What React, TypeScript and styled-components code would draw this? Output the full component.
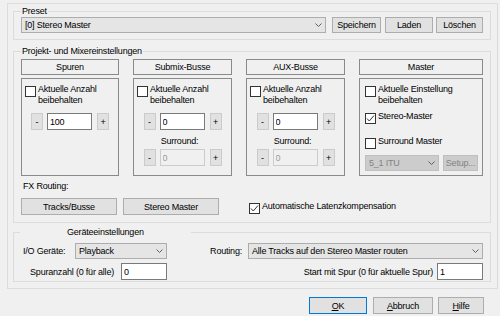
import React from "react";
import styled, { createGlobalStyle } from "styled-components";

const FONT = `"Liberation Sans", Arial, sans-serif`;

const Global = createGlobalStyle`
  html, body { margin: 0; padding: 0; background: #f0f0f0; }
  body { font-family: ${FONT}; font-size: 9px; letter-spacing: -0.2px; color: #000; }
  #root { width: 500px; height: 316px; overflow: hidden; }
`;

const Dialog = styled.div`
  width: 500px;
  height: 316px;
  box-sizing: border-box;
  padding: 3px 0 0 7px;
  display: flex;
  flex-direction: column;
`;

const Outer = styled.div`
  width: 491px;
  box-sizing: border-box;
  border: 1px solid #dcdcdc;
  padding: 2px 6px 6px 5px;
  display: flex;
  flex-direction: column;
`;

const Group = styled.fieldset<{ $mt: number; $pt: number; $pb: number }>`
  margin: ${(p) => p.$mt}px 0 0 0;
  padding: ${(p) => p.$pt}px 7px ${(p) => p.$pb}px 7px;
  border: 1px solid #dcdcdc;
  min-width: 0;
  box-sizing: border-box;
`;

const Legend = styled.legend<{ $pad?: number }>`
  font-size: 9px;
  line-height: 10px;
  height: 10px;
  padding: 0 ${(p) => p.$pad ?? 1}px;
  margin-left: ${(p) => (p.$pad ? -1 : 0)}px;
`;

const Row = styled.div<{ $h?: number; $mt?: number }>`
  display: flex;
  align-items: center;
  ${(p) => (p.$h ? `height:${p.$h}px;` : "")}
  margin-top: ${(p) => p.$mt ?? 0}px;
`;

const Combo = styled.div<{ $w?: number; $disabled?: boolean; $ml?: number }>`
  box-sizing: border-box;
  height: 16px;
  ${(p) => (p.$w ? `width:${p.$w}px; flex:none;` : `flex:1; min-width:0;`)}
  margin-left: ${(p) => p.$ml ?? 0}px;
  display: flex;
  align-items: center;
  justify-content: space-between;
  padding: 0 3px 0 3px;
  background: ${(p) => (p.$disabled ? "#cccccc" : "#e5e5e5")};
  border: 1px solid ${(p) => (p.$disabled ? "#bfbfbf" : "#adadad")};
  color: ${(p) => (p.$disabled ? "#838383" : "#000")};
  white-space: nowrap;
  svg { flex: none; }
`;

const Button = styled.div<{ $w: number; $h: number; $default?: boolean; $disabled?: boolean; $ml?: number }>`
  box-sizing: border-box;
  width: ${(p) => p.$w}px;
  height: ${(p) => p.$h}px;
  flex: none;
  margin-left: ${(p) => p.$ml ?? 0}px;
  display: flex;
  align-items: center;
  justify-content: center;
  background: ${(p) => (p.$disabled ? "#cccccc" : "#e1e1e1")};
  border: 1px solid ${(p) => (p.$default ? "#0078d7" : p.$disabled ? "#bfbfbf" : "#adadad")};
  color: ${(p) => (p.$disabled ? "#838383" : "#000")};
  white-space: nowrap;
  u { text-decoration: underline; text-underline-offset: 1px; }
`;

const Columns = styled.div`
  display: grid;
  grid-template-columns: 98px 99px 99px 124px;
  column-gap: 14px;
`;

const Column = styled.div`
  display: flex;
  flex-direction: column;
  gap: 3px;
`;

const Header = styled.div`
  box-sizing: border-box;
  height: 16px;
  border: 1px solid #8a8a8a;
  display: flex;
  align-items: center;
  justify-content: center;
`;

const Panel = styled.div<{ $pl?: number }>`
  box-sizing: border-box;
  height: 98px;
  border: 1px solid #8a8a8a;
  padding: 5px 3px 0 ${(p) => p.$pl ?? 3}px;
  display: flex;
  flex-direction: column;
`;

const CheckRow = styled.div<{ $mt?: number; $ml?: number }>`
  display: flex;
  align-items: flex-start;
  margin-top: ${(p) => p.$mt ?? 0}px;
  margin-left: ${(p) => p.$ml ?? 0}px;
`;

const Box = styled.span`
  box-sizing: border-box;
  width: 11px;
  height: 11px;
  margin-top: 2px;
  flex: none;
  background: #fff;
  border: 1px solid #333;
  display: flex;
  align-items: center;
  justify-content: center;
`;

const CheckText = styled.span`
  line-height: 11px;
  margin-left: 2px;
  white-space: nowrap;
`;

const SpinRow = styled.div<{ $mt: number }>`
  display: flex;
  justify-content: center;
  margin-top: ${(p) => p.$mt}px;
  height: 17px;
`;

const SpinBtn = styled.div<{ $side: "l" | "r" }>`
  box-sizing: border-box;
  width: 12px;
  height: 17px;
  background: #e1e1e1;
  border: 1px solid #cbcbcb;
  display: flex;
  align-items: center;
  justify-content: center;
  font-size: 9px;
  margin-right: ${(p) => (p.$side === "l" ? 4 : 0)}px;
  margin-left: ${(p) => (p.$side === "r" ? 5 : 0)}px;
`;

const NumInput = styled.input<{ $w: number; $ml?: number }>`
  box-sizing: border-box;
  width: ${(p) => p.$w}px;
  height: 17px;
  flex: none;
  margin: 0 0 0 ${(p) => p.$ml ?? 0}px;
  padding: 0 0 0 2px;
  font-family: ${FONT};
  font-size: 9px;
  letter-spacing: -0.2px;
  color: #000;
  background: #fff;
  border: 1px solid #7a7a7a;
  outline: none;
  &:disabled {
    background: #f0f0f0;
    border-color: #cccccc;
    color: #9a9a9a;
  }
`;

const SubLabel = styled.div`
  text-align: center;
  line-height: 11px;
  margin-top: 6px;
  padding-right: 6px;
`;

const FxLabel = styled.div`
  line-height: 11px;
  margin: 5px 0 0 2px;
`;

const FxRow = styled.div`
  display: flex;
  align-items: flex-start;
  margin-top: 6px;
`;

const FieldLabel = styled.div<{ $w?: number; $ml?: number; $right?: boolean }>`
  ${(p) => (p.$w ? `width:${p.$w}px;` : "")}
  text-align: ${(p) => (p.$right ? "right" : "left")};
  flex: none;
  margin-left: ${(p) => p.$ml ?? 0}px;
  white-space: nowrap;
`;

const Spacer = styled.div`
  flex: 1;
`;

const ButtonBar = styled.div`
  display: flex;
  justify-content: flex-end;
  padding-right: 16px;
  margin-top: 8px;
`;

const Chevron = () => (
  <svg width="7" height="4" viewBox="0 0 7 4">
    <polyline points="0.5,0.5 3.5,3.5 6.5,0.5" fill="none" stroke="#606060" strokeWidth="1" />
  </svg>
);

const Check = ({ checked }: { checked?: boolean }) => (
  <Box>
    {checked && (
      <svg width="9" height="9" viewBox="0 0 9 9">
        <polyline points="1,4.5 3.3,7 8,1.5" fill="none" stroke="#333" strokeWidth="1" />
      </svg>
    )}
  </Box>
);

const Spin = ({ value, disabled, mt }: { value: string; disabled?: boolean; mt: number }) => (
  <SpinRow $mt={mt}>
    <SpinBtn $side="l">-</SpinBtn>
    <NumInput $w={45} readOnly disabled={disabled} value={value} />
    <SpinBtn $side="r">+</SpinBtn>
  </SpinRow>
);

const KeepCount = () => (
  <CheckRow>
    <Check />
    <CheckText>
      Aktuelle Anzahl
      <br />
      beibehalten
    </CheckText>
  </CheckRow>
);

export default function App() {
  return (
    <>
      <Global />
      <Dialog>
        <Outer>
          <Group $mt={0} $pt={1} $pb={6}>
            <Legend>Preset</Legend>
            <Row $h={16}>
              <Combo>
                <span>[0] Stereo Master</span>
                <Chevron />
              </Combo>
              <Button $w={49} $h={16} $ml={6}>Speichern</Button>
              <Button $w={48} $h={16} $ml={4}>Laden</Button>
              <Button $w={47} $h={16} $ml={3}>Löschen</Button>
            </Row>
          </Group>

          <Group $mt={6} $pt={3} $pb={7}>
            <Legend>Projekt- und Mixereinstellungen</Legend>
            <Columns>
              <Column>
                <Header>Spuren</Header>
                <Panel>
                  <KeepCount />
                  <Spin value="100" mt={7} />
                </Panel>
              </Column>
              <Column>
                <Header>Submix-Busse</Header>
                <Panel>
                  <KeepCount />
                  <Spin value="0" mt={7} />
                  <SubLabel>Surround:</SubLabel>
                  <Spin value="0" disabled mt={2} />
                </Panel>
              </Column>
              <Column>
                <Header>AUX-Busse</Header>
                <Panel>
                  <KeepCount />
                  <Spin value="0" mt={7} />
                  <SubLabel>Surround:</SubLabel>
                  <Spin value="0" disabled mt={2} />
                </Panel>
              </Column>
              <Column>
                <Header>Master</Header>
                <Panel $pl={5}>
                  <CheckRow>
                    <Check />
                    <CheckText>
                      Aktuelle Einstellung
                      <br />
                      beibehalten
                    </CheckText>
                  </CheckRow>
                  <CheckRow $mt={5}>
                    <Check checked />
                    <CheckText>Stereo-Master</CheckText>
                  </CheckRow>
                  <CheckRow $mt={12}>
                    <Check />
                    <CheckText>Surround Master</CheckText>
                  </CheckRow>
                  <Row $mt={6} $h={16}>
                    <Combo $w={74} $disabled>
                      <span>5_1 ITU</span>
                      <Chevron />
                    </Combo>
                    <Button $w={35} $h={16} $ml={4} $disabled>
                      Setup...
                    </Button>
                  </Row>
                </Panel>
              </Column>
            </Columns>
            <FxLabel>FX Routing:</FxLabel>
            <FxRow>
              <Button $w={96} $h={17}>Tracks/Busse</Button>
              <Button $w={96} $h={17} $ml={6}>Stereo Master</Button>
              <CheckRow $ml={30} $mt={3}>
                <Check checked />
                <CheckText>Automatische Latenzkompensation</CheckText>
              </CheckRow>
            </FxRow>
          </Group>

          <Group $mt={4} $pt={6} $pb={1}>
            <Legend $pad={47}>Geräteeinstellungen</Legend>
            <Row $h={16}>
              <FieldLabel $ml={2} $w={52}>I/O Geräte:</FieldLabel>
              <Combo $w={92}>
                <span>Playback</span>
                <Chevron />
              </Combo>
              <Spacer />
              <FieldLabel>Routing:</FieldLabel>
              <Combo $w={235} $ml={6}>
                <span>Alle Tracks auf den Stereo Master routen</span>
                <Chevron />
              </Combo>
            </Row>
            <Row $h={17} $mt={4}>
              <FieldLabel $w={93} $right>Spuranzahl (0 für alle)</FieldLabel>
              <NumInput $w={46} $ml={7} readOnly value="0" />
              <Spacer />
              <FieldLabel>Start mit Spur (0 für aktuelle Spur)</FieldLabel>
              <NumInput $w={46} $ml={4} readOnly value="1" />
            </Row>
          </Group>
        </Outer>
        <ButtonBar>
          <Button $w={58} $h={17} $default>
            <span><u>O</u>K</span>
          </Button>
          <Button $w={60} $h={17} $ml={6}>
            <span><u>A</u>bbruch</span>
          </Button>
          <Button $w={46} $h={17} $ml={5}>
            <span><u>H</u>ilfe</span>
          </Button>
        </ButtonBar>
      </Dialog>
    </>
  );
}
